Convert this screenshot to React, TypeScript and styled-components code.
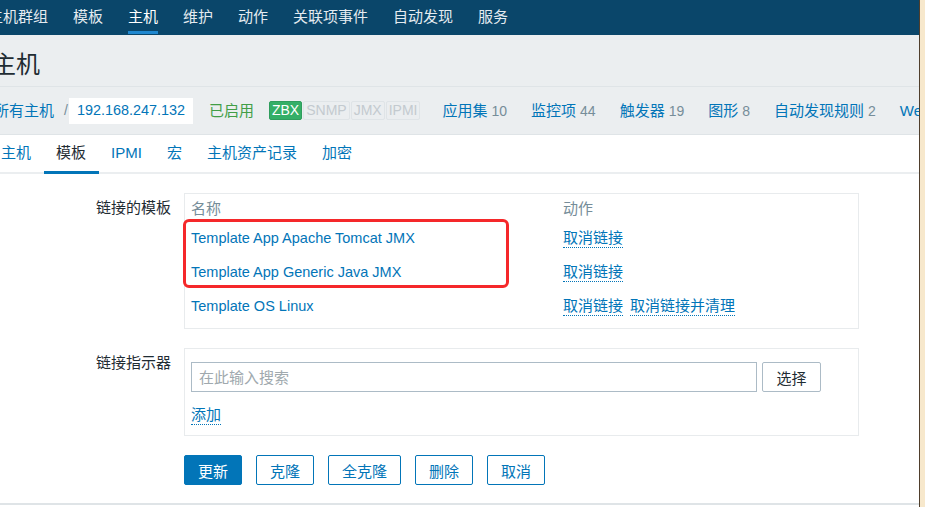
import React from "react";
import styled, { createGlobalStyle } from "styled-components";

const GlobalStyle = createGlobalStyle`
  html, body {
    margin: 0;
    padding: 0;
  }
  body {
    font-family: "Liberation Sans", "Noto Sans CJK SC", Arial, sans-serif;
    font-size: 14px;
    line-height: 1.3;
    color: #1f2c33;
    background: #fff;
  }
`;

const LINK = "#0275b8";

const navItems = ["主机群组", "模板", "主机", "维护", "动作", "关联项事件", "自动发现", "服务"];
const sectionLinks = [
  { label: "应用集", count: 10 },
  { label: "监控项", count: 44 },
  { label: "触发器", count: 19 },
  { label: "图形", count: 8 },
  { label: "自动发现规则", count: 2 },
  { label: "Web 场景", count: null },
];
const tabs = ["主机", "模板", "IPMI", "宏", "主机资产记录", "加密"];
const templates = [
  { name: "Template App Apache Tomcat JMX", clear: false },
  { name: "Template App Generic Java JMX", clear: false },
  { name: "Template OS Linux", clear: true },
];

function App() {
  return (
    <Root>
      <GlobalStyle />
      <Page>
        <Nav>
          <NavList>
            {navItems.map((item) => (
              <NavItem key={item}>
                <NavLabel $active={item === "主机"}>{item}</NavLabel>
              </NavItem>
            ))}
          </NavList>
        </Nav>

        <Header>
          <Title>主机</Title>
        </Header>

        <Crumbs>
          <CrumbLink>所有主机</CrumbLink>
          <Sep>/</Sep>
          <CurrentHost>192.168.247.132</CurrentHost>
          <Status>已启用</Status>
          <Badges>
            <Badge $on>ZBX</Badge>
            <Badge>SNMP</Badge>
            <Badge>JMX</Badge>
            <Badge>IPMI</Badge>
          </Badges>
          <SectionLinks>
            {sectionLinks.map((s) => (
              <SectionLink key={s.label}>
                {s.label}
                {s.count !== null && <Count>{s.count}</Count>}
              </SectionLink>
            ))}
          </SectionLinks>
        </Crumbs>

        <TabRow>
          <TabList>
            {tabs.map((t) => (
              <Tab key={t} $active={t === "模板"}>{t}</Tab>
            ))}
          </TabList>
        </TabRow>

        <FormGrid>
          <Label>链接的模板</Label>
          <Box>
            <TemplateTable>
              <HeadRow>
                <HeadCell>名称</HeadCell>
                <HeadCell>动作</HeadCell>
              </HeadRow>
              {templates.map((t) => (
                <Row key={t.name}>
                  <NameLink>{t.name}</NameLink>
                  <Actions>
                    <ActionLink>取消链接</ActionLink>
                    {t.clear && <ActionLink>取消链接并清理</ActionLink>}
                  </Actions>
                </Row>
              ))}
            </TemplateTable>
            <Annotation />
          </Box>

          <Label>链接指示器</Label>
          <LinkBox>
            <SearchRow>
              <SearchInput placeholder="在此输入搜索" />
              <SelectButton>选择</SelectButton>
            </SearchRow>
            <AddLink>添加</AddLink>
          </LinkBox>

          <span />
          <ButtonRow>
            <Button $primary>更新</Button>
            <Button>克隆</Button>
            <Button>全克隆</Button>
            <Button>删除</Button>
            <Button>取消</Button>
          </ButtonRow>
        </FormGrid>

        <Footer />
      </Page>
      <Edge />
    </Root>
  );
}

const Root = styled("div")`
  display: flex;
  width: 925px;
  height: 507px;
  overflow: hidden;
`;

const Page = styled("div")`
  flex: none;
  width: 919px;
  height: 507px;
  display: flex;
  flex-direction: column;
  overflow: hidden;
  background: #fff;
`;

const Edge = styled("div")`
  flex: 1;
  background: #f7e8cc;
  border-left: 1px solid #4f3e2c;
`;

const Nav = styled("div")`
  flex: none;
  height: 35px;
  background: #0a466a;
  display: flex;
  overflow: hidden;
`;

const NavList = styled("div")`
  display: flex;
  margin-left: -24.5px;
  white-space: nowrap;
`;

const NavItem = styled("div")`
  padding: 0 12.5px;
  display: flex;
`;

const NavLabel = styled("span")<{ $active?: boolean }>`
  display: inline-flex;
  align-items: center;
  box-sizing: border-box;
  height: 34px;
  padding-top: 2px;
  font-size: 15px;
  color: ${({ $active }) => ($active ? "#ffffff" : "#e4ebf0")};
  border-bottom: 3px solid ${({ $active }) => ($active ? "#1f87cf" : "transparent")};
`;

const Header = styled("div")`
  flex: none;
  box-sizing: border-box;
  height: 52px;
  padding-top: 8px;
  display: flex;
  align-items: center;
  background: #ebeef0;
  border-bottom: 1px solid #dfe4e7;
`;

const Title = styled("h1")`
  margin: 0 0 0 -8px;
  font-size: 24px;
  font-weight: normal;
  line-height: 1;
  color: #1f2c33;
`;

const Crumbs = styled("div")`
  flex: none;
  box-sizing: border-box;
  height: 48px;
  display: flex;
  align-items: center;
  white-space: nowrap;
  background: #ebeef0;
  border-bottom: 1px solid #dfe4e7;
`;

const CrumbLink = styled("span")`
  margin-left: -6px;
  font-size: 15px;
  color: ${LINK};
`;

const Sep = styled("span")`
  margin: 0 1px 0 10px;
  color: #768d99;
`;

const CurrentHost = styled("span")`
  height: 26px;
  padding: 0 8px;
  display: flex;
  align-items: center;
  background: #fff;
  color: ${LINK};
  font-size: 14.4px;
`;

const Status = styled("span")`
  margin-left: 16px;
  font-size: 15px;
  color: #429e47;
`;

const Badges = styled("div")`
  margin-left: 15px;
  display: flex;
  gap: 1px;
`;

const Badge = styled("span")<{ $on?: boolean }>`
  height: 19px;
  box-sizing: border-box;
  padding: 0 2px;
  display: flex;
  align-items: center;
  border-radius: 2px;
  font-size: 14px;
  border: 1px solid ${({ $on }) => ($on ? "#2f9d5d" : "#dfe4e7")};
  background: ${({ $on }) => ($on ? "#34af67" : "#ebeef0")};
  color: ${({ $on }) => ($on ? "#ffffff" : "#c3cacf")};
`;

const SectionLinks = styled("div")`
  margin-left: 22px;
  display: flex;
  gap: 24px;
`;

const SectionLink = styled("span")`
  font-size: 15px;
  color: ${LINK};
`;

const Count = styled("span")`
  margin-left: 4px;
  font-size: 14px;
  color: #768d99;
`;

const TabRow = styled("div")`
  flex: none;
  height: 39px;
  display: flex;
  box-shadow: inset 0 -2px 0 #ebeef0;
`;

const TabList = styled("div")`
  display: flex;
  margin-left: -11.5px;
  white-space: nowrap;
`;

const Tab = styled("div")<{ $active?: boolean }>`
  box-sizing: border-box;
  height: 39px;
  padding: 0 12.5px;
  display: flex;
  align-items: center;
  font-size: 15px;
  color: ${({ $active }) => ($active ? "#1f2c33" : LINK)};
  border-bottom: 3px solid ${({ $active }) => ($active ? LINK : "transparent")};
`;

const FormGrid = styled("div")`
  display: grid;
  grid-template-columns: 171px 675px;
  column-gap: 13px;
  row-gap: 19px;
  padding-top: 19px;
`;

const Label = styled("div")`
  text-align: right;
  padding-top: 6px;
  font-size: 15px;
  line-height: 18px;
  color: #1f2c33;
`;

const Box = styled("div")`
  position: relative;
  border: 1px solid #e8ebed;
`;

const TemplateTable = styled("div")`
  padding: 3px 0 5px 6px;
`;

const HeadRow = styled("div")`
  display: grid;
  grid-template-columns: 372px 1fr;
  align-items: center;
  height: 24px;
`;

const Row = styled(HeadRow)`
  height: 34px;
`;

const HeadCell = styled("span")`
  font-size: 15px;
  color: #768d99;
`;

const NameLink = styled("span")`
  font-size: 14.5px;
  color: ${LINK};
`;

const Actions = styled("div")`
  display: flex;
  align-items: center;
  gap: 7px;
`;

const ActionLink = styled("span")`
  font-size: 15px;
  line-height: 18px;
  color: ${LINK};
  border-bottom: 1px dotted ${LINK};
`;

const Annotation = styled("div")`
  position: absolute;
  left: -2px;
  top: 25px;
  width: 326px;
  height: 69px;
  box-sizing: border-box;
  border: 3px solid #f5282a;
  border-radius: 6px;
  pointer-events: none;
`;

const LinkBox = styled("div")`
  display: flex;
  flex-direction: column;
  align-items: flex-start;
  padding: 13px 6px 10px;
  border: 1px solid #e8ebed;
`;

const SearchRow = styled("div")`
  display: flex;
  gap: 5px;
`;

const SearchInput = styled("input")`
  width: 566px;
  height: 30px;
  box-sizing: border-box;
  padding: 0 7px;
  border: 1px solid #acbbc6;
  border-radius: 0;
  font-family: "Liberation Sans", "Noto Sans CJK SC", sans-serif;
  font-size: 15px;
  color: #1f2c33;
  outline: none;

  &::placeholder {
    color: #a0a9ae;
  }
`;

const SelectButton = styled("button")`
  width: 59px;
  height: 30px;
  padding: 0;
  border: 1px solid #acbbc6;
  border-radius: 2px;
  background: #fff;
  font-family: "Liberation Sans", "Noto Sans CJK SC", sans-serif;
  font-size: 15px;
  color: #1f2c33;
`;

const AddLink = styled(ActionLink)`
  margin-top: 14px;
`;

const ButtonRow = styled("div")`
  display: flex;
  gap: 14px;
`;

const Button = styled("button")<{ $primary?: boolean }>`
  height: 30px;
  padding: 0 13px;
  border: 1px solid ${LINK};
  border-radius: 2px;
  font-family: "Liberation Sans", "Noto Sans CJK SC", sans-serif;
  font-size: 15px;
  background: ${({ $primary }) => ($primary ? LINK : "#fff")};
  color: ${({ $primary }) => ($primary ? "#fff" : LINK)};
`;

const Footer = styled("div")`
  flex: 1;
  margin-top: 18px;
  border-top: 2px solid #dfe4e7;
`;

export default App;
